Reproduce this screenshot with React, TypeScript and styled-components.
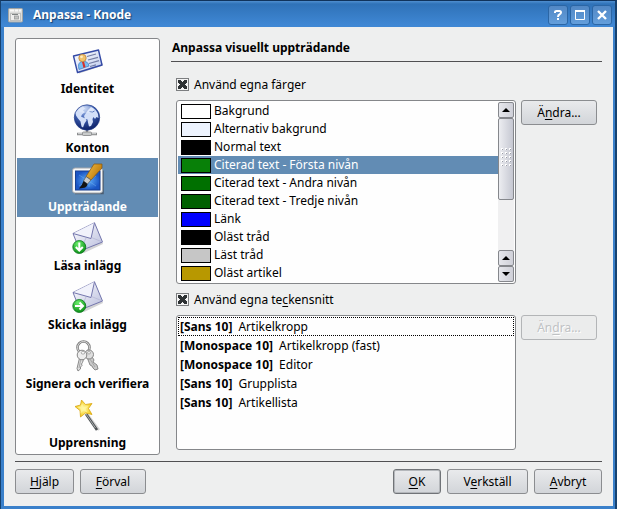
import React, { useState } from 'react';
import styled, { createGlobalStyle, css } from 'styled-components';

const GlobalStyle = createGlobalStyle`
  * { box-sizing: border-box; }
  html, body { margin: 0; padding: 0; }
  body, button, input {
    font-family: 'Noto Sans', 'Open Sans', sans-serif;
    font-size: 12px;
    line-height: 18px;
    color: #000;
  }
  ul { list-style: none; margin: 0; padding: 0; }
`;

const Window = styled.div`
  display: flex;
  flex-direction: column;
  min-height: 100vh;
  border: 1px solid #17426f;
  border-top-color: #10335c;
  border-right-width: 2px;
  background: #3a80ca;
`;

const TitleBar = styled.header`
  display: flex;
  align-items: center;
  gap: 10px;
  height: 26px;
  padding: 2px 3px 0 7px;
  background: linear-gradient(#4f8fd0 0, #2f72b8 3px, #3f87d4 24px);
`;

const Title = styled.h1`
  flex: 1;
  margin: 0;
  font-size: 12px;
  line-height: 18px;
  font-weight: 700;
  color: #fff;
  text-shadow: 1px 1px 1px #173f70;
`;

const TitleButtons = styled.div`
  display: flex;
  gap: 2px;
`;

const TitleButton = styled.button`
  display: flex;
  align-items: center;
  justify-content: center;
  width: 20px;
  height: 20px;
  padding: 0;
  border: 1px solid #2b66a5;
  border-radius: 3px;
  background: linear-gradient(#5288c5, #639edb);
`;

const Body = styled.main`
  flex: 1;
  display: flex;
  flex-direction: column;
  margin: 0 2px 3px 3px;
  padding: 11px 11px 12px;
  background: #eeefef;
`;

const Columns = styled.div`
  flex: 1;
  display: flex;
  gap: 11px;
`;

const frame = css`
  border: 1px solid #85878a;
  border-radius: 3px;
  background: #fefefe;
  padding: 1px;
`;

const Sidebar = styled.nav`
  ${frame}
  flex: none;
  width: 145px;
`;

const PageButton = styled.button<{ $active: boolean }>`
  display: flex;
  flex-direction: column;
  align-items: center;
  gap: 3px;
  width: 100%;
  height: 59px;
  padding: 5px 0 0;
  border: 0;
  font-weight: 700;
  white-space: nowrap;
  background: ${(p) => (p.$active ? '#628cb4' : 'transparent')};
  color: ${(p) => (p.$active ? '#fff' : '#000')};
  svg { display: block; }
`;

const Content = styled.section`
  flex: 1;
  min-width: 0;
  display: flex;
  flex-direction: column;
`;

const Heading = styled.h2`
  margin: 0 0 13px;
  padding: 0 1px 4px;
  border-bottom: 1px solid #505052;
  font-size: 12px;
  line-height: 19px;
  font-weight: 700;
`;

const Group = styled.div`
  display: flex;
  flex-direction: column;
  gap: 6px;
  padding: 0 5px;
  margin-bottom: 6px;

  &:last-child {
    margin-bottom: 0;
  }
`;

const CheckLabel = styled.label`
  display: flex;
  align-items: center;
  gap: 5px;
  height: 19px;
`;

const CheckBox = styled.input`
  appearance: none;
  width: 13px;
  height: 13px;
  margin: 0;
  border: 1px solid #7c7e80;
  background: #f4f4f4 center / 9px 9px no-repeat;
  &:checked {
    background-image:
      linear-gradient(45deg, transparent 38%, #2e3234 38%, #2e3234 62%, transparent 62%),
      linear-gradient(-45deg, transparent 38%, #2e3234 38%, #2e3234 62%, transparent 62%);
  }
`;

const GroupRow = styled.div`
  display: flex;
  align-items: flex-start;
  gap: 5px;
`;

const ColorFrame = styled.div`
  ${frame}
  flex: 1;
  display: flex;
  height: 184px;
`;

const ColorList = styled.ul`
  flex: 1;
  overflow: hidden;
`;

const ColorItem = styled.li<{ $active: boolean }>`
  display: flex;
  align-items: center;
  gap: 3px;
  height: 18px;
  padding-left: 3px;
  white-space: nowrap;
  background: ${(p) => (p.$active ? '#628cb4' : 'transparent')};
  color: ${(p) => (p.$active ? '#fff' : '#000')};
`;

const Swatch = styled.span<{ $color: string }>`
  width: 30px;
  height: 15px;
  border: 1px solid #000;
  background: ${(p) => p.$color};
`;

const FontList = styled.ul`
  ${frame}
  flex: 1;
  height: 135px;
`;

const FontItem = styled.li<{ $active: boolean }>`
  display: flex;
  gap: 6px;
  height: 19px;
  padding-left: 1px;
  border: 1px ${(p) => (p.$active ? 'dotted #000' : 'solid transparent')};
  line-height: 17px;
  white-space: nowrap;
`;

const ScrollBar = styled.div`
  display: flex;
  flex-direction: column;
  width: 16px;
  background: #f0f0f1;
`;

const ScrollButton = styled.button`
  display: flex;
  align-items: center;
  justify-content: center;
  height: 16px;
  padding: 0;
  border: 1px solid #85878c;
  border-radius: 2px;
  background: linear-gradient(90deg, #e6e7ec, #cfd0d8);
`;

const Thumb = styled.div`
  display: flex;
  justify-content: center;
  height: 82px;
  padding-top: 29px;
  border: 1px solid #85878c;
  border-radius: 2px;
  background: linear-gradient(90deg, #ecedf1, #c6c8d2);
`;

const Track = styled.div`
  flex: 1;
`;

const Button = styled.button<{ $default?: boolean; $width?: number }>`
  height: 25px;
  min-width: ${(p) => p.$width ?? 59}px;
  padding: 0 8px;
  border: 1px solid #8b8d90;
  border-radius: 3px;
  background: linear-gradient(#e9eaec, #d2d5d9);
  white-space: nowrap;
  ${(p) => p.$default && css`
    border-color: #707377;
    box-shadow: inset 0 0 0 1px #b4b7bb;
  `}
  &:disabled {
    border-color: #b3b5b7;
    background: #ebecec;
    color: #bfc2c4;
    text-shadow: 1px 1px 0 #fff;
  }
`;

const SideButton = styled(Button)`
  flex: none;
  width: 76px;
`;

const Key = styled.span`
  text-decoration: underline;
  text-underline-offset: 2px;
`;

const Footer = styled.footer`
  display: flex;
  gap: 6px;
  margin-top: 6px;
  padding-top: 7px;
  border-top: 1px solid #505052;
`;

const Spacer = styled.div`
  flex: 1;
`;

const AppIcon = () => (
  <svg width="15" height="15" viewBox="0 0 15 15" aria-hidden="true">
    <rect x=".5" y=".5" width="14" height="13.500" rx="1" fill="#dcdddb" stroke="#a2a5a4" />
    <path d="M2 2.500h4M7 2.500h3M11 2.500h2" stroke="#f8f8f6" strokeWidth="2" />
    <rect x="2.500" y="5.500" width="10" height="7" fill="#eeeeec" stroke="#bfc0be" />
    <path d="M4 6.500h6" stroke="#7f8483" />
    <rect x="6.500" y="8" width="4" height="3" fill="#c2c4c3" stroke="#989b9a" strokeWidth=".8" />
  </svg>
);

const HelpGlyph = () => (
  <svg width="12" height="12" viewBox="0 0 12 12" aria-hidden="true">
    <path d="M3 4V3Q3 2 4.500 2H7.500Q9 2 9 3.500Q9 4.500 7.500 5.500Q6 6.200 6 8" fill="none" stroke="#fff" strokeWidth="2" />
    <rect x="5" y="9" width="2" height="2" fill="#fff" />
  </svg>
);
const MaxGlyph = () => (
  <svg width="12" height="12" viewBox="0 0 12 12" aria-hidden="true">
    <path d="M1.500 2.500h9v8h-9z" fill="none" stroke="#fff" />
    <path d="M1 2h10" stroke="#fff" strokeWidth="2" />
  </svg>
);
const CloseGlyph = () => (
  <svg width="12" height="12" viewBox="0 0 12 12" aria-hidden="true">
    <path d="M2 2l8 8M10 2l-8 8" stroke="#fff" strokeWidth="2.400" />
  </svg>
);

const IdentityIcon = () => (
  <svg width="32" height="32" viewBox="0 0 32 32" aria-hidden="true">
    <defs>
      <linearGradient id="card" x1="0" y1="0" x2="1" y2="1">
        <stop offset="0" stopColor="#fff" /><stop offset="1" stopColor="#bcc9ec" />
      </linearGradient>
    </defs>
    <path d="M3 12.500L26 6L31 20.500L7 28.500z" fill="#c9c9cc" />
    <path d="M1.500 11L26.500 5L30 20L5.500 27.500z" fill="url(#card)" stroke="#344aa6" strokeWidth="1.400" strokeLinejoin="round" />
    <path d="M15 11.500l9-2.500M16 15l10-2.700M17 18.500l10-2.800M18 21.500l6-1.700" stroke="#747da4" strokeWidth="1.200" />
    <path d="M7 24.500Q5 17.500 10 16.500Q16 15.500 17 21z" fill="#79bdf0" stroke="#3b78c4" strokeWidth=".7" />
    <path d="M10 17l2-.5 1.500 5.500-2 1z" fill="#d8302a" />
    <circle cx="10.500" cy="13" r="3.700" fill="#f1c26a" stroke="#b77a2b" strokeWidth=".7" />
    <circle cx="9.500" cy="11.800" r="1.400" fill="#ffecc0" />
  </svg>
);

const GlobeIcon = () => (
  <svg width="32" height="32" viewBox="0 0 32 32" aria-hidden="true">
    <defs>
      <radialGradient id="globe" cx=".4" cy=".15" r=".85">
        <stop offset="0" stopColor="#b9cdf3" /><stop offset=".45" stopColor="#4062b4" /><stop offset="1" stopColor="#0c2068" />
      </radialGradient>
    </defs>
    <path d="M5 30h20M15 25v4" stroke="#8b8d8e" strokeWidth="2.400" />
    <path d="M6 29.700h18" stroke="#d8dada" />
    <rect x="10.500" y="28" width="9" height="3.500" rx="1" fill="#c9cbcb" stroke="#858788" strokeWidth=".8" />
    <circle cx="15" cy="13.500" r="12.700" fill="url(#globe)" stroke="#26408c" strokeWidth=".7" />
    <path d="M3.500 9Q6 4 11 2.500l2 2-2 2 2 1.500-3 2.500-1 2 2 1 2.500 1 1 2-2 3-1.500 4-1.500-1-1-5-2.500-3-2-3z" fill="#d3dff8" />
    <path d="M16 6l3-3q5 2 7 7l.5 4-2-1-1.500 2-1.500-2-1 2 .5 3-2 4-2 .5-1-4-.5-3-2.500-.5-1-3 2-3z" fill="#d3dff8" />
    <path d="M17.500 7.500l3 .5 2-1" stroke="#5e7dc1" fill="none" />
    <ellipse cx="14" cy="5.500" rx="8" ry="3.500" fill="#fff" opacity=".25" />
  </svg>
);

const AppearanceIcon = () => (
  <svg width="32" height="32" viewBox="0 0 32 32" aria-hidden="true">
    <defs>
      <radialGradient id="screen"><stop offset="0" stopColor="#5fb0fa" /><stop offset="1" stopColor="#1a55c4" /></radialGradient>
      <linearGradient id="handle" x1="0" y1="0" x2="1" y2=".6"><stop offset="0" stopColor="#f3bf48" /><stop offset="1" stopColor="#b97608" /></linearGradient>
    </defs>
    <path d="M3 30.500h28v-23" fill="none" stroke="#4b5c70" strokeWidth="1.500" />
    <rect x=".5" y="5" width="30" height="25" rx="2.500" fill="#f6f7f7" stroke="#a2a6ab" />
    <rect x="3.500" y="8" width="24.500" height="19" fill="url(#screen)" stroke="#163f91" />
    <path d="M7 12l8 5 9 6M7 23l17-10M17 10v14" stroke="#8bc8ff" strokeWidth=".7" opacity=".5" />
    <path d="M22 1h8v4l-11 12-5-3.500z" fill="url(#handle)" stroke="#835313" strokeWidth=".7" />
    <path d="M14 13.500l5 3.500-3.500 4-4-3z" fill="#c9cbcb" stroke="#555" strokeWidth=".7" />
    <path d="M11.500 18l4 3q-.5 4-5 4l-3.500.5q3-3 4.500-7.500z" fill="#131313" />
  </svg>
);

const MailIcon = ({ direction }: { direction: 'down' | 'right' }) => (
  <svg width="32" height="32" viewBox="0 0 32 32" aria-hidden="true">
    <defs>
      <linearGradient id={`paper-${direction}`} x1="0" y1="0" x2="1" y2="1"><stop offset="0" stopColor="#fff" /><stop offset="1" stopColor="#b9bddd" /></linearGradient>
      <radialGradient id={`dot-${direction}`} cx=".4" cy=".25" r=".8"><stop offset="0" stopColor="#6af06a" /><stop offset="1" stopColor="#078a12" /></radialGradient>
    </defs>
    <path d="M4 14l20-10 7 18-19 9z" fill="#d3d3d5" />
    <path d="M1 11.500L22.500 .8L30.500 20L8 29z" fill={`url(#paper-${direction})`} stroke="#7476ad" strokeLinejoin="round" />
    <path d="M1 11.500L19 16.500L22.500 .8" fill="#f1f2fb" stroke="#7476ad" strokeLinejoin="round" />
    <path d="M8 29L14 16M30.500 20L19.500 15.500" stroke="#b1b3d2" strokeWidth=".7" />
    <circle cx="7.300" cy="25" r="6.500" fill={`url(#dot-${direction})`} stroke="#08731a" strokeWidth=".8" />
    <path
      d={direction === 'down' ? 'M7.300 20.500v8M3.800 25l3.500 3.500L10.800 25' : 'M3 25h8M7.500 21.500l3.500 3.500L7.500 28.500'}
      fill="none" stroke="#fff" strokeWidth="2"
    />
  </svg>
);

const KeysIcon = () => (
  <svg width="32" height="32" viewBox="0 0 32 32" aria-hidden="true">
    <circle cx="11.500" cy="7.500" r="6" fill="none" stroke="#808080" strokeWidth="2.600" />
    <circle cx="11.500" cy="7.500" r="6" fill="none" stroke="#dadada" />
    <path d="M15 17l4-2 3 5-1 2 4 3 1 4-3 1-2-2-1-2-2-1z" fill="#c9c9c9" stroke="#808080" strokeWidth=".9" />
    <path d="M7.500 18l4 1.500-1 3-1 1.500.5 1.500-1.500 1.500v2l-2.500 2-1-2.500z" fill="#dedede" stroke="#808080" strokeWidth=".9" />
    <ellipse cx="17" cy="14.500" rx="4.500" ry="4.500" fill="#dedede" stroke="#7b7b7b" strokeWidth=".9" />
    <ellipse cx="10" cy="15" rx="4.800" ry="4.800" fill="#ededed" stroke="#7b7b7b" strokeWidth=".9" />
    <ellipse cx="11" cy="12.800" rx="1.800" ry="1.300" fill="#fff" stroke="#8d8d8d" strokeWidth=".7" />
    <ellipse cx="17" cy="12.800" rx="1.500" ry="1.200" fill="#fff" stroke="#8d8d8d" strokeWidth=".7" />
    <path d="M8.700 20l-1.700 8M18 19l5 8" stroke="#a3a3a3" strokeWidth=".9" />
  </svg>
);

const WandIcon = () => (
  <svg width="32" height="32" viewBox="0 0 32 32" aria-hidden="true">
    <defs><radialGradient id="star"><stop offset="0" stopColor="#fff9ae" /><stop offset="1" stopColor="#f5cc19" /></radialGradient></defs>
    <path d="M15 15l12 16" stroke="#d3d3d3" strokeWidth="2.500" />
    <path d="M14 15l11 16" stroke="#4b4f51" strokeWidth="2.600" />
    <path d="M14 15l9.500 14" stroke="#b4b9bb" strokeWidth=".9" />
    <path d="M9.500 1l4 4.500 6.500-1-3.500 5 3.500 6-6.500-1.500-5 4-.5-6.500-5-4 5.500-1.500z" fill="url(#star)" stroke="#d8a413" strokeWidth=".8" strokeLinejoin="round" />
    <path d="M10 4l1.500 4 5-1-3 3 2 3.500-4-2-3 3 .5-4.500-4-2 4-.3z" fill="#fff7a0" opacity=".7" />
  </svg>
);

const Arrow = ({ up }: { up?: boolean }) => (
  <svg width="8" height="4" viewBox="0 0 8 4" aria-hidden="true">
    <path d={up ? 'M0 4h8L4 0z' : 'M0 0h8L4 4z'} fill="#000" />
  </svg>
);

const Grip = () => (
  <svg width="11" height="20" viewBox="0 0 11 20" aria-hidden="true">
    {[0, 4, 8, 12, 16].map((y) =>
      [0, 4, 8].map((x) => (
        <g key={`${x}-${y}`}>
          <rect x={x} y={y} width="2" height="2" fill="#fff" />
          <rect x={x + 1} y={y + 1} width="1" height="1" fill="#9a9da6" />
        </g>
      )),
    )}
  </svg>
);

const pages = [
  { name: 'Identitet', icon: <IdentityIcon /> },
  { name: 'Konton', icon: <GlobeIcon /> },
  { name: 'Uppträdande', icon: <AppearanceIcon /> },
  { name: 'Läsa inlägg', icon: <MailIcon direction="down" /> },
  { name: 'Skicka inlägg', icon: <MailIcon direction="right" /> },
  { name: 'Signera och verifiera', icon: <KeysIcon /> },
  { name: 'Upprensning', icon: <WandIcon /> },
];

const colors = [
  { name: 'Bakgrund', color: '#ffffff' },
  { name: 'Alternativ bakgrund', color: '#edf3fe' },
  { name: 'Normal text', color: '#000000' },
  { name: 'Citerad text - Första nivån', color: '#088008' },
  { name: 'Citerad text - Andra nivån', color: '#007000' },
  { name: 'Citerad text - Tredje nivån', color: '#006000' },
  { name: 'Länk', color: '#0000fe' },
  { name: 'Oläst tråd', color: '#000000' },
  { name: 'Läst tråd', color: '#c6c6c6' },
  { name: 'Oläst artikel', color: '#b89800' },
];

const fonts = [
  { font: 'Sans 10', name: 'Artikelkropp' },
  { font: 'Monospace 10', name: 'Artikelkropp (fast)' },
  { font: 'Monospace 10', name: 'Editor' },
  { font: 'Sans 10', name: 'Grupplista' },
  { font: 'Sans 10', name: 'Artikellista' },
];

export default function App() {
  const [page, setPage] = useState(2);
  const [color, setColor] = useState(3);
  const [font, setFont] = useState(0);

  return (
    <>
      <GlobalStyle />
      <Window>
        <TitleBar>
          <AppIcon />
          <Title>Anpassa - Knode</Title>
          <TitleButtons>
            <TitleButton aria-label="Hjälp"><HelpGlyph /></TitleButton>
            <TitleButton aria-label="Maximera"><MaxGlyph /></TitleButton>
            <TitleButton aria-label="Stäng"><CloseGlyph /></TitleButton>
          </TitleButtons>
        </TitleBar>
        <Body>
          <Columns>
            <Sidebar>
              {pages.map((p, i) => (
                <PageButton key={p.name} $active={i === page} onClick={() => setPage(i)}>
                  {p.icon}
                  {p.name}
                </PageButton>
              ))}
            </Sidebar>
            <Content>
              <Heading>Anpassa visuellt uppträdande</Heading>
              <Group>
                <CheckLabel>
                  <CheckBox type="checkbox" defaultChecked />
                  <span>Använd egna färger</span>
                </CheckLabel>
                <GroupRow>
                  <ColorFrame>
                    <ColorList role="listbox" aria-label="Färger">
                      {colors.map((c, i) => (
                        <ColorItem key={c.name} role="option" aria-selected={i === color} $active={i === color} onClick={() => setColor(i)}>
                          <Swatch $color={c.color} />
                          {c.name}
                        </ColorItem>
                      ))}
                    </ColorList>
                    <ScrollBar>
                      <ScrollButton aria-label="Rulla upp"><Arrow up /></ScrollButton>
                      <Thumb><Grip /></Thumb>
                      <Track />
                      <ScrollButton aria-label="Rulla upp"><Arrow up /></ScrollButton>
                      <ScrollButton aria-label="Rulla ner"><Arrow /></ScrollButton>
                    </ScrollBar>
                  </ColorFrame>
                  <SideButton>Ä<Key>n</Key>dra...</SideButton>
                </GroupRow>
              </Group>
              <Group>
                <CheckLabel>
                  <CheckBox type="checkbox" defaultChecked />
                  <span>Använd egna te<Key>c</Key>kensnitt</span>
                </CheckLabel>
                <GroupRow>
                  <FontList role="listbox" aria-label="Teckensnitt">
                    {fonts.map((f, i) => (
                      <FontItem key={i} role="option" aria-selected={i === font} $active={i === font} onClick={() => setFont(i)}>
                        <b>[{f.font}]</b>
                        <span>{f.name}</span>
                      </FontItem>
                    ))}
                  </FontList>
                  <SideButton disabled>Än<Key>d</Key>ra...</SideButton>
                </GroupRow>
              </Group>
            </Content>
          </Columns>
          <Footer>
            <Button $width={59}><Key>H</Key>jälp</Button>
            <Button $width={66}><Key>F</Key>örval</Button>
            <Spacer />
            <Button $default $width={48}><Key>O</Key>K</Button>
            <Button $width={81}>V<Key>e</Key>rkställ</Button>
            <Button $width={68}><Key>A</Key>vbryt</Button>
          </Footer>
        </Body>
      </Window>
    </>
  );
}
